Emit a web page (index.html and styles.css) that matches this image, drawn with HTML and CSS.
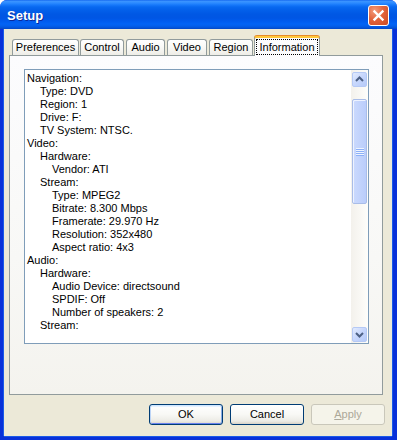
FILE: index.html
```html
<!DOCTYPE html>
<html>
<head>
<meta charset="utf-8">
<title>Setup</title>
<link rel="stylesheet" href="styles.css">
</head>
<body>
<div class="window">
  <div class="titlebar">
    <span class="title">Setup</span>
    <div class="close">
      <svg width="19" height="19" viewBox="0 0 19 19"><path d="M5.5 5.5 L13.5 13.5 M13.5 5.5 L5.5 13.5" stroke="#fff" stroke-width="2.4" stroke-linecap="square"/></svg>
    </div>
  </div>
  <div class="client">
    <div class="tabs">
      <div class="tab t-pref">Preferences</div>
      <div class="tab t-ctrl">Control</div>
      <div class="tab t-audio">Audio</div>
      <div class="tab t-video">Video</div>
      <div class="tab t-region">Region</div>
      <div class="tab selected"><span class="focus">Information</span></div>
    </div>
    <div class="page">
      <div class="infobox">
        <div class="lines">
          <div class="l0">Navigation:</div>
          <div class="l1">Type: DVD</div>
          <div class="l1">Region: 1</div>
          <div class="l1">Drive: F:</div>
          <div class="l1">TV System: NTSC.</div>
          <div class="l0">Video:</div>
          <div class="l1">Hardware:</div>
          <div class="l2">Vendor: ATI</div>
          <div class="l1">Stream:</div>
          <div class="l2">Type: MPEG2</div>
          <div class="l2">Bitrate: 8.300 Mbps</div>
          <div class="l2">Framerate: 29.970 Hz</div>
          <div class="l2">Resolution: 352x480</div>
          <div class="l2">Aspect ratio: 4x3</div>
          <div class="l0">Audio:</div>
          <div class="l1">Hardware:</div>
          <div class="l2">Audio Device: directsound</div>
          <div class="l2">SPDIF: Off</div>
          <div class="l2">Number of speakers: 2</div>
          <div class="l1">Stream:</div>
        </div>
        <div class="scrollbar">
          <div class="arrow">
            <svg width="13" height="13" viewBox="0 0 13 13"><polyline points="3,8 6.5,4.5 10,8" fill="none" stroke="#4D6185" stroke-width="2"/></svg>
          </div>
          <div class="track">
            <div class="thumb">
              <svg width="8" height="8" viewBox="0 0 8 8">
                <rect x="0" y="0" width="8" height="1" fill="#EEF4FE"/>
                <rect x="0" y="1" width="8" height="1" fill="#8CB0F8"/>
                <rect x="0" y="2" width="8" height="1" fill="#EEF4FE"/>
                <rect x="0" y="3" width="8" height="1" fill="#8CB0F8"/>
                <rect x="0" y="4" width="8" height="1" fill="#EEF4FE"/>
                <rect x="0" y="5" width="8" height="1" fill="#8CB0F8"/>
                <rect x="0" y="6" width="8" height="1" fill="#EEF4FE"/>
                <rect x="0" y="7" width="8" height="1" fill="#8CB0F8"/>
              </svg>
            </div>
          </div>
          <div class="arrow">
            <svg width="13" height="13" viewBox="0 0 13 13"><polyline points="3,5 6.5,8.5 10,5" fill="none" stroke="#4D6185" stroke-width="2"/></svg>
          </div>
        </div>
      </div>
    </div>
    <div class="buttons">
      <button class="btn default">OK</button>
      <button class="btn">Cancel</button>
      <button class="btn disabled"><u>A</u>pply</button>
    </div>
  </div>
</div>
</body>
</html>
```

FILE: styles.css
```css
html, body {
  margin: 0;
  padding: 0;
}
body {
  width: 397px;
  height: 440px;
  overflow: hidden;
  background: #ffffff;
  font-family: "Liberation Sans", Arial, sans-serif;
  font-size: 11px;
  color: #000;
}
.window {
  width: 397px;
  height: 440px;
  display: flex;
  flex-direction: column;
  background: #0831D9;
  border-radius: 7px 7px 0 0;
  box-sizing: border-box;
}
.titlebar {
  height: 29px;
  flex: none;
  display: flex;
  align-items: center;
  padding: 0 8px 0 7px;
  border-radius: 7px 7px 0 0;
  background: linear-gradient(to bottom,
    #0A5CEB 0px, #3D95FF 1px, #2C8BFF 3px, #1678FA 5px, #0868F0 7px,
    #0360EA 10px, #0058E4 14px, #0056E4 18px, #005BEE 21px,
    #0263F5 24px, #035FEC 26px, #0352D6 28px, #0546C4 29px);
}
.title {
  flex: 1;
  color: #fff;
  font-weight: bold;
  font-size: 13px;
  padding-top: 1px;
  text-shadow: 1px 1px 0 #0A2A9B;
}
.close {
  width: 21px;
  height: 21px;
  margin-top: 2px;
  box-sizing: border-box;
  border: 1px solid #ffffff;
  border-radius: 3px;
  background: radial-gradient(circle at 30% 25%, #F49B7C 0%, #E2643C 45%, #CC4A22 100%);
  display: flex;
  align-items: center;
  justify-content: center;
}
.close svg { display: block; }

.client {
  flex: 1;
  margin: 0 5px 4px 4px;
  padding: 7px 7px 0 5px;
  background: #ECE9D8;
  display: flex;
  flex-direction: column;
  box-shadow: -1px 0 0 #1A5AE8, 1px 0 0 #1A5AE8, 0 1px 0 #1A5AE8;
}
.tabs {
  height: 19px;
  display: flex;
  align-items: flex-end;
  padding-left: 3px;
  position: relative;
  z-index: 2;
}
.tab {
  height: 16px;
  box-sizing: border-box;
  border: 1px solid #919B9C;
  border-bottom: none;
  border-radius: 3px 3px 0 0;
  background: linear-gradient(to bottom, #FFFFFF 0%, #FAFAF8 40%, #EEEDE7 100%);
  line-height: 14px;
  text-align: center;
  white-space: nowrap;
}
.t-pref { width: 67px; }
.t-ctrl { width: 44px; margin-left: 1px; }
.t-audio { width: 39px; margin-left: 2px; }
.t-video { width: 40px; margin-left: 2px; }
.t-region { width: 44px; margin-left: 2px; }
.tab.selected {
  width: 66px;
  height: 20px;
  margin-left: 1px;
  margin-bottom: -1px;
  border-top: 2px solid #FFC83C;
  box-shadow: 0 -1px 0 #E68B2C;
  background: #FCFCFE;
  padding: 0 1px;
}
.focus {
  display: block;
  border: 1px dotted #000;
  line-height: 14px;
  margin-top: 1px;
}

.page {
  width: 374px;
  height: 340px;
  box-sizing: border-box;
  border: 1px solid #919B9C;
  background: linear-gradient(to bottom, #FCFCFE 0%, #F8F8F6 60%, #F4F3EE 100%);
  padding: 13px 0 0 14px;
  position: relative;
  z-index: 1;
}
.infobox {
  width: 345px;
  height: 275px;
  box-sizing: border-box;
  border: 1px solid #7F9DB9;
  background: #ffffff;
  display: flex;
}
.lines {
  flex: 1;
  padding: 2px 0 0 2px;
  line-height: 13px;
  overflow: hidden;
  white-space: nowrap;
}
.l1 { padding-left: 13px; }
.l2 { padding-left: 25px; }

.scrollbar {
  width: 17px;
  flex: none;
  box-sizing: border-box;
  padding: 2px 1px 1px 1px;
  display: flex;
  flex-direction: column;
  background: linear-gradient(to right, #F3F1EC, #FEFEFB);
}
.arrow {
  height: 15px;
  flex: none;
  box-sizing: border-box;
  border: 1px solid #B5C9F5;
  border-radius: 2px;
  background: linear-gradient(135deg, #E2EBFE 0%, #C6D6FC 50%, #B5CAF9 100%);
  display: flex;
  align-items: center;
  justify-content: center;
}
.arrow svg { display: block; }
.track {
  flex: 1;
  padding-top: 12px;
}
.thumb {
  height: 105px;
  box-sizing: border-box;
  border: 1px solid #A9BDE8;
  border-radius: 2px;
  background: linear-gradient(to right, #CBDAFD, #BACDFB);
  box-shadow: inset 1px 1px 0 #EEF3FF;
  display: flex;
  align-items: center;
  justify-content: center;
}
.thumb svg { display: block; }

.buttons {
  display: flex;
  justify-content: flex-end;
  gap: 7px;
  margin-top: 9px;
}
.btn {
  width: 74px;
  height: 21px;
  padding: 0;
  margin: 0;
  box-sizing: border-box;
  border: 1px solid #003C74;
  border-radius: 3px;
  background: linear-gradient(to bottom, #FFFFFF 0%, #F8F8F5 50%, #ECEBE5 85%, #D8D2C6 100%);
  font-family: "Liberation Sans", Arial, sans-serif;
  font-size: 11px;
  color: #000;
  line-height: 19px;
}
.btn.default {
  box-shadow: inset 0 1px 0 #CEE7FF, inset 1px 0 0 #BCD4F6, inset -1px 0 0 #89ADE4, inset 0 -1px 0 #6982EE, inset 0 2px 0 #E6F1FF;
}
.btn.disabled {
  border-color: #C9C7BA;
  background: #F5F4EA;
  color: #ACA899;
}
.btn u { text-decoration: underline; }
```
